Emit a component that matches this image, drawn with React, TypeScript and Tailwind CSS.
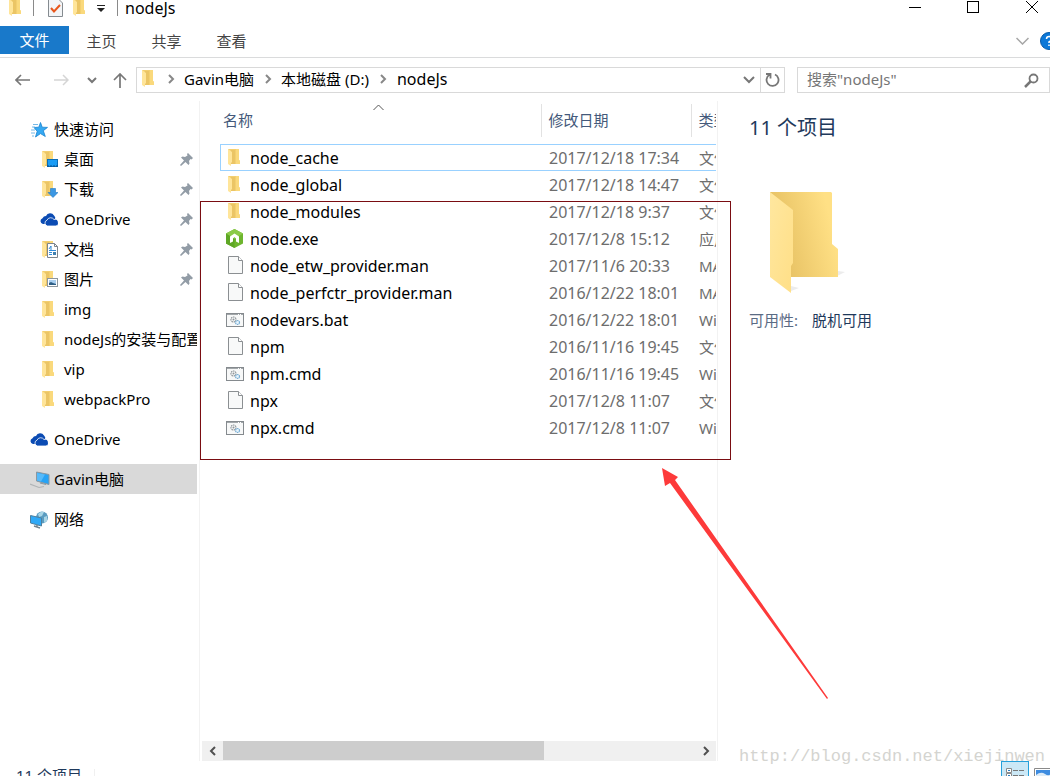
import type { ReactNode } from "react";

type FileKind = "folder" | "node" | "blank" | "script";

const files: { name: string; date: string; type: string; kind: FileKind }[] = [
  { name: "node_cache", date: "2017/12/18 17:34", type: "文件夹", kind: "folder" },
  { name: "node_global", date: "2017/12/18 14:47", type: "文件夹", kind: "folder" },
  { name: "node_modules", date: "2017/12/18 9:37", type: "文件夹", kind: "folder" },
  { name: "node.exe", date: "2017/12/8 15:12", type: "应用程序", kind: "node" },
  { name: "node_etw_provider.man", date: "2017/11/6 20:33", type: "MAN 文件", kind: "blank" },
  { name: "node_perfctr_provider.man", date: "2016/12/22 18:01", type: "MAN 文件", kind: "blank" },
  { name: "nodevars.bat", date: "2016/12/22 18:01", type: "Windows 批处理", kind: "script" },
  { name: "npm", date: "2016/11/16 19:45", type: "文件", kind: "blank" },
  { name: "npm.cmd", date: "2016/11/16 19:45", type: "Windows 命令", kind: "script" },
  { name: "npx", date: "2017/12/8 11:07", type: "文件", kind: "blank" },
  { name: "npx.cmd", date: "2017/12/8 11:07", type: "Windows 命令", kind: "script" },
];

function FolderShape() {
  return (
    <>
      <path d="M0 0h11v11l1 1v3H2z" fill="#f3cf70" />
      <path d="M3 1h4v14H3z" fill="#ebc565" />
      <path d="M8 0h3v11l1 1v3H8z" fill="#fad97c" />
      <path d="M0 0l4 3v10l-1 1v3l-3-2z" fill="#ffe59a" />
    </>
  );
}

function Folder() {
  return (
    <svg className="shrink-0" width="18" height="18" viewBox="-2 0 18 18" aria-hidden="true">
      <FolderShape />
    </svg>
  );
}

function DesktopFolder() {
  return (
    <svg className="shrink-0" width="18" height="18" viewBox="-2 0 18 18" aria-hidden="true">
      <FolderShape />
      <rect x="5.5" y="8.5" width="10" height="7" fill="#1a9cf5" stroke="#0b6db5" />
      <path d="M5 15h11" stroke="#0a4f8a" strokeDasharray="2 1" />
    </svg>
  );
}

function DownloadFolder() {
  return (
    <svg className="shrink-0" width="18" height="18" viewBox="-2 0 18 18" aria-hidden="true">
      <FolderShape />
      <path d="M8.5 7.500h5v4h2.500l-5 5-5-5h2.500z" fill="#3b97e3" stroke="#2179c4" strokeWidth=".6" />
    </svg>
  );
}

function DocumentFolder() {
  return (
    <svg className="shrink-0" width="18" height="18" viewBox="-2 0 18 18" aria-hidden="true">
      <FolderShape />
      <path d="M5.500 2.500h7l3 3v11h-10z" fill="#fff" stroke="#7d858c" />
      <path d="M12.500 2.500v3h3" fill="none" stroke="#7d858c" />
      <path d="M7 8l2-3v4M7 11.500h3M7 13.500h3M7 9.500h7" fill="none" stroke="#2f8bd8" />
      <path d="M11 11h3v3h-3z" fill="#3f7fae" />
    </svg>
  );
}

function PictureFolder() {
  return (
    <svg className="shrink-0" width="18" height="18" viewBox="-2 0 18 18" aria-hidden="true">
      <FolderShape />
      <rect x="5.500" y="7.500" width="10" height="8" fill="#fff" stroke="#8d969d" />
      <path d="M7 9h7v5H7z" fill="#a8cdee" />
      <path d="M7 14v-2l2-1 2 1 3 1v1z" fill="#2f5f86" />
    </svg>
  );
}

function Cloud() {
  return (
    <svg className="shrink-0" width="18" height="14" viewBox="0 0 18 14" aria-hidden="true">
      <path d="M5 11H3a3 3 0 0 1-.500-5.800A4 4 0 0 1 6 3a4.500 4.500 0 0 1 8-.500 3.500 3.500 0 0 1 1 4" fill="#0b4bb3" />
      <path d="M7.500 13a3 3 0 0 1-.500-5.800A4 4 0 0 1 14 6.500 3 3 0 0 1 16 13z" fill="#0b4bb3" stroke="#fff" strokeWidth=".8" />
    </svg>
  );
}

function Star() {
  return (
    <svg className="shrink-0" width="18" height="16" viewBox="0 0 18 16" aria-hidden="true">
      <path d="M10.500.500l1.700 4.700 5.300.200-4.200 3.300 2 5.800-4.800-2.900-5 3.400 1.700-5.700L4 5.500l4.800-.300z" fill="#35a9f2" stroke="#1782cf" strokeWidth=".8" />
      <path d="M3 2.500h5M2 5h3M1 8h4M1 11h4M2 14h2" stroke="#74b9e8" />
    </svg>
  );
}

function Computer() {
  return (
    <svg className="shrink-0" width="20" height="18" viewBox="0 0 20 18" aria-hidden="true">
      <path d="M6.500 1l12.500 2.500v10L6.500 10z" fill="#27a3f5" stroke="#8a97a0" />
      <path d="M7 2l8 1.500-4 7L7 9.500z" fill="#7fcdfb" opacity=".55" />
      <path d="M10 12l6 1.500" stroke="#8b979e" />
      <path d="M0 13l9 3.500 5-1" fill="none" stroke="#b0b4b6" strokeWidth="1.200" />
    </svg>
  );
}

function Network() {
  return (
    <svg className="shrink-0" width="18" height="18" viewBox="0 0 18 18" aria-hidden="true">
      <circle cx="12" cy="6.500" r="6" fill="#5b9cc0" />
      <path d="M8 3q3-3 6-2l-2 4-3 1zM14 6l3-1v5l-3 2z" fill="#a8d5e6" />
      <path d="M.500 4.500l11 2.500v8L.500 12z" fill="#2fa9f7" stroke="#4e7f9d" />
      <path d="M4 15l6 2M7 14v2" stroke="#72838d" strokeWidth="1.500" />
    </svg>
  );
}

function Pin() {
  return (
    <svg className="ml-auto mr-1 shrink-0" width="13" height="13" viewBox="0 0 13 13" aria-hidden="true">
      <path d="M8 0l5 5-1.500 1.500L10.500 6 9 8l.500 2.500L8.500 12 5.500 9 1 13l-1-1 4-4.500-3-3L2.500 3.500 5 4l2.500-1.500L7 1z" fill="#929ca6" />
    </svg>
  );
}

function BlankFile() {
  return (
    <svg width="16" height="19" viewBox="0 0 16 19" aria-hidden="true">
      <path d="M.500.500h10l4 4v13H.500z" fill="#f8f9f9" stroke="#8b8f92" />
      <path d="M10.500.500v4h4" fill="#fff" stroke="#8b8f92" />
    </svg>
  );
}

function ScriptFile() {
  return (
    <svg width="18" height="14" viewBox="0 0 18 14" aria-hidden="true">
      <rect x=".500" y=".500" width="17" height="13" fill="#f7f8f8" stroke="#858a8e" />
      <path d="M1 1.500h16" stroke="#a2a7aa" />
      <path d="M12 1.500h4" stroke="#fff" strokeDasharray="1 1" />
      <circle cx="7.500" cy="6.500" r="2.500" fill="none" stroke="#8b9297" strokeWidth="1.200" strokeDasharray="1.500 .7" />
      <circle cx="7.500" cy="6.500" r="1" fill="#90969a" />
      <circle cx="11.500" cy="9.500" r="2" fill="#e8f4fc" stroke="#79aed4" strokeWidth="1.200" strokeDasharray="1.500 .5" />
    </svg>
  );
}

function NodeFile() {
  return (
    <svg width="18" height="19" viewBox="0 0 18 19" aria-hidden="true">
      <path d="M8.500 0L17 4.500v10L8.500 19 0 14.500v-10z" fill="#6eb52f" />
      <path d="M8.500 0L17 4.500 8.500 10 0 4.500z" fill="#8bcb48" />
      <path d="M0 4.500L8.500 10v9L0 14.500z" fill="#5ea725" />
      <path d="M4 7.500L8.500 4.500 13 7.500V14l-3-1.500V9.500L8.500 8 7 9.500v3L4 14z" fill="#fff" />
    </svg>
  );
}

function FileIcon({ kind }: { kind: FileKind }) {
  if (kind === "folder") return <Folder />;
  if (kind === "node") return <NodeFile />;
  if (kind === "script") return <ScriptFile />;
  return <BlankFile />;
}

function Chevron({ dir, className }: { dir: "down" | "right" | "left"; className?: string }) {
  const paths = {
    down: "M1 3l4 4 4-4",
    right: "M3 1l4 4-4 4",
    left: "M7 1L3 5l4 4",
  };
  return (
    <svg className={className} width="10" height="10" viewBox="0 0 10 10" fill="none" stroke="currentColor" strokeWidth="2" aria-hidden="true">
      <path d={paths[dir]} />
    </svg>
  );
}

function NavItem({ icon, label, root, pinned, active }: { icon: ReactNode; label: string; root?: boolean; pinned?: boolean; active?: boolean }) {
  return (
    <a
      href="#"
      className={`mr-[2px] flex h-[30px] items-center overflow-hidden whitespace-nowrap ${root ? "pl-[30px]" : "pl-10"} ${active ? "bg-[#d9d9d9]" : ""}`}
    >
      <span className="flex w-6 shrink-0 items-center pt-[2px]">{icon}</span>
      <span>{label}</span>
      {pinned ? <Pin /> : null}
    </a>
  );
}

function TitleBar() {
  return (
    <header className="flex h-[26px] shrink-0 items-start">
      <div className="flex h-4 items-center pl-[7px]">
        <Folder />
        <span className="ml-2 h-4 w-px bg-[#8a8a8a]" />
        <svg className="ml-[14px]" width="15" height="17" viewBox="0 0 15 17" aria-hidden="true">
          <path d="M.500 0v16.500h14V3l-3-3" fill="#f3f5f7" stroke="#858b90" />
          <path d="M3 8l3 3.500L12 5" fill="none" stroke="#e8571c" strokeWidth="2" />
        </svg>
        <span className="ml-2 flex"><Folder /></span>
        <svg className="ml-2" width="8" height="7" viewBox="0 0 8 7" aria-hidden="true">
          <path d="M0 0h8v1H0zM0 3h8L4 7z" fill="#222" />
        </svg>
        <span className="ml-3 h-4 w-px bg-[#8a8a8a]" />
        <h1 className="ml-[7px] text-base leading-4">nodeJs</h1>
      </div>
      <div className="ml-auto flex h-[14px]">
        <button type="button" aria-label="最小化" className="flex w-[58px] items-center justify-center">
          <span className="h-px w-3 bg-black" />
        </button>
        <button type="button" aria-label="最大化" className="flex w-[58px] items-center justify-center">
          <span className="size-3 border border-black" />
        </button>
        <button type="button" aria-label="关闭" className="flex w-12 items-center pl-6">
          <svg width="12" height="12" viewBox="0 0 12 12" stroke="#000" aria-hidden="true">
            <path d="M0 0l12 12M12 0L0 12" />
          </svg>
        </button>
      </div>
    </header>
  );
}

function Ribbon() {
  return (
    <div className="flex h-8 shrink-0 overflow-hidden border-b border-[#dadbdc] text-[#444]">
      <button type="button" className="h-7 w-[69px] bg-[#1979ca] text-white">文件</button>
      {["主页", "共享", "查看"].map((tab) => (
        <button type="button" key={tab} className="h-[30px] w-[65px]">{tab}</button>
      ))}
      <button type="button" aria-label="展开功能区" className="ml-auto flex h-[30px] w-6 items-center text-[#a6a6a6]">
        <svg width="13" height="8" viewBox="0 0 13 8" fill="none" stroke="currentColor" aria-hidden="true">
          <path d="M.500 1l6 6 6-6" strokeWidth="1.500" />
        </svg>
      </button>
      <button type="button" aria-label="帮助" className="h-[30px] w-[10px] overflow-hidden">
        <svg className="max-w-none" width="18" height="18" viewBox="0 0 18 18" fill="none" aria-hidden="true">
          <circle cx="9" cy="9" r="8.500" fill="#0b78d8" stroke="#075aa8" />
          <path d="M6.500 7q0-2.500 2.500-2.500T11.500 7Q11.500 8.500 9 10v1M9 12.500v1.500" stroke="#fff" strokeWidth="1.500" />
        </svg>
      </button>
    </div>
  );
}

function AddressRow() {
  return (
    <div className="flex shrink-0 items-center pb-2 pt-[9px]">
      <div className="flex w-[136px] items-center pl-[15px] text-[#777]">
        <button type="button" aria-label="后退">
          <svg className="block" width="15" height="12" viewBox="0 0 15 12" fill="none" stroke="currentColor" strokeWidth="1.700" aria-hidden="true">
            <path d="M15 6H1M6 1L1 6l5 5" />
          </svg>
        </button>
        <button type="button" aria-label="前进" className="ml-6 text-[#d5d5d5]">
          <svg className="block" width="15" height="12" viewBox="0 0 15 12" fill="none" stroke="currentColor" strokeWidth="1.500" aria-hidden="true">
            <path d="M0 6h14M9 1l5 5-5 5" />
          </svg>
        </button>
        <button type="button" aria-label="最近的位置" className="ml-[18px]"><Chevron dir="down" /></button>
        <button type="button" aria-label="上移" className="ml-4">
          <svg className="block" width="14" height="15" viewBox="0 0 14 15" fill="none" stroke="currentColor" strokeWidth="1.700" aria-hidden="true">
            <path d="M7 15V1M1 7l6-6 6 6" />
          </svg>
        </button>
      </div>
      <nav aria-label="地址" className="flex h-[26px] flex-1 items-center border border-[#d9d9d9] pb-[2px] pl-[3px] text-black">
        <Folder />
        <Chevron dir="right" className="ml-2 text-[#888]" />
        <a href="#" className="ml-2">Gavin电脑</a>
        <Chevron dir="right" className="ml-[9px] text-[#888]" />
        <a href="#" className="ml-2">本地磁盘 (D:)</a>
        <Chevron dir="right" className="ml-[9px] text-[#888]" />
        <a href="#" className="ml-[9px] text-base leading-5">nodeJs</a>
        <button type="button" aria-label="以前的位置" className="ml-auto pr-[5px] pt-[2px] text-[#777]">
          <svg className="block" width="12" height="8" viewBox="0 0 12 8" fill="none" stroke="currentColor" strokeWidth="2" aria-hidden="true">
            <path d="M1 1l5 5 5-5" />
          </svg>
        </button>
        <button type="button" aria-label="刷新" className="-mb-[2px] flex w-6 items-center justify-center self-stretch border-l border-[#d9d9d9] text-[#777]">
          <svg width="15" height="16" viewBox="0 0 15 16" fill="none" stroke="currentColor" strokeWidth="1.800" aria-hidden="true">
            <path d="M10 2.500a6 6 0 1 1-5.500.300M1 2h4.500v4.500" />
          </svg>
        </button>
      </nav>
      <label className="ml-3 flex h-[26px] w-[253px] items-center border border-[#d9d9d9] pl-[9px] pr-[10px]">
        <input
          type="text"
          aria-label="搜索"
          placeholder={'搜索"nodeJs"'}
          className="min-w-0 flex-1 pb-[2px] outline-none placeholder:text-[#767676]"
        />
        <svg width="15" height="15" viewBox="0 0 15 15" fill="none" stroke="#777" aria-hidden="true">
          <circle cx="9.500" cy="5.500" r="4" strokeWidth="1.800" />
          <path d="M6.500 8.500L1 14" strokeWidth="2.500" />
        </svg>
      </label>
    </div>
  );
}

function Sidebar() {
  return (
    <nav aria-label="导航窗格" className="w-[200px] shrink-0 border-r border-[#f2f2f2] pt-[13px] text-black">
      <NavItem root icon={<Star />} label="快速访问" />
      <NavItem icon={<DesktopFolder />} label="桌面" pinned />
      <NavItem icon={<DownloadFolder />} label="下载" pinned />
      <NavItem icon={<Cloud />} label="OneDrive" pinned />
      <NavItem icon={<DocumentFolder />} label="文档" pinned />
      <NavItem icon={<PictureFolder />} label="图片" pinned />
      <NavItem icon={<Folder />} label="img" />
      <NavItem icon={<Folder />} label="nodeJs的安装与配置" />
      <NavItem icon={<Folder />} label="vip" />
      <NavItem icon={<Folder />} label="webpackPro" />
      <div className="mt-[10px] flex flex-col gap-[10px]">
        <NavItem root icon={<Cloud />} label="OneDrive" />
        <NavItem root active icon={<Computer />} label="Gavin电脑" />
        <NavItem root icon={<Network />} label="网络" />
      </div>
    </nav>
  );
}

function FileList() {
  return (
    <section className="relative flex w-[518px] shrink-0 flex-col border-r border-[#f2f2f2] pr-px pt-[3px]">
      <div className="min-h-0 flex-1 overflow-hidden pl-5">
        <table className="w-[640px] table-fixed border-collapse text-left">
          <thead>
            <tr className="h-[33px] text-[#44597a]">
              <th scope="col" className="relative w-[321px] border-r border-[#e2e2e2] pb-[2px] pl-[3px] font-normal">
                名称
                <svg className="absolute left-[153px] top-0" width="11" height="7" viewBox="0 0 11 7" fill="none" stroke="#555" aria-hidden="true">
                  <path d="M.500 6l5-5 5 5" />
                </svg>
              </th>
              <th scope="col" className="w-[150px] border-r border-[#e2e2e2] pb-[2px] pl-[7px] font-normal">修改日期</th>
              <th scope="col" className="pb-[2px] pl-[7px] font-normal">类型</th>
            </tr>
          </thead>
          <tbody className="before:block before:h-[7px]">
            {files.map((f, i) => (
              <tr key={f.name} className={`h-[27px] text-[#6d6d6d] ${i === 0 ? "outline -outline-offset-1 outline-[#99d1ff]" : ""}`}>
                <td className="pl-[6px] text-base leading-5 text-black">
                  <span className="flex items-center">
                    <span className={`flex w-6 ${f.kind === "blank" ? "pl-[2px]" : ""}`}>
                      <FileIcon kind={f.kind} />
                    </span>
                    {f.name}
                  </span>
                </td>
                <td className="whitespace-nowrap pl-2 text-base leading-5">{f.date}</td>
                <td className="whitespace-nowrap pl-2">{f.type}</td>
              </tr>
            ))}
          </tbody>
        </table>
      </div>

      <div className="ml-[2px] flex h-5 shrink-0 items-center bg-[#f0f0f0] text-[#505050]">
        <button type="button" aria-label="向左滚动" className="flex w-[21px] justify-center"><Chevron dir="left" /></button>
        <div className="flex h-full flex-1">
          <div className="h-[19px] w-[68%] bg-[#cdcdcd]" />
        </div>
        <button type="button" aria-label="向右滚动" className="flex w-[21px] justify-center"><Chevron dir="right" /></button>
      </div>

      {/* callout box and arrow drawn over the list */}
      <div className="pointer-events-none absolute left-0 top-[100px] h-[259px] w-[531px] border border-[#7a0d12]" />
      <svg className="pointer-events-none absolute left-[462px] top-[367px]" width="168" height="232" viewBox="0 0 168 232" aria-hidden="true">
        <path d="M0 0l16 9-3 3 153 218-1 1L8 15l-5 3z" fill="#fd3a3a" />
      </svg>
    </section>
  );
}

function Preview() {
  return (
    <aside className="min-w-0 flex-1 pl-[31px] pt-[13px] text-[#1e395b]">
      <h2 className="text-[20px] leading-7">11 个项目</h2>
      <svg className="ml-[21px] mt-[49px]" width="77" height="104" viewBox="0 0 77 104" aria-hidden="true">
        <defs>
          <linearGradient id="back" x1="0" y1="1" x2="1" y2=".7">
            <stop offset=".2" stopColor="#e6c062" />
            <stop offset="1" stopColor="#ffe085" />
          </linearGradient>
          <linearGradient id="flap" x1="0" y1="0" x2="1" y2="1">
            <stop offset="0" stopColor="#ffe79f" />
            <stop offset="1" stopColor="#ffdf87" />
          </linearGradient>
        </defs>
        <path d="M67 85l8-4-7-1zM21 100l8-3-8-2z" fill="#ececec" />
        <path d="M0 1h61l1 1v51l6 5v28H20z" fill="url(#back)" />
        <path d="M0 1l23 18v53l-2 3v27L0 86z" fill="url(#flap)" />
      </svg>
      <dl className="mt-[15px] flex leading-5">
        <dt className="w-[63px] text-[#5a6b84]">可用性:</dt>
        <dd>脱机可用</dd>
      </dl>
    </aside>
  );
}

function StatusBar() {
  return (
    <footer className="flex h-[15px] shrink-0 items-start overflow-hidden pl-4 text-[#1e395b]">
      <span className="pt-1 leading-5">11 个项目</span>
      <span className="ml-3 mt-2 h-3 w-px bg-[#f0f0f0]" />
      <button type="button" aria-label="详细信息" className="ml-auto flex h-6 w-7 justify-center border border-[#26a0da] bg-[#cbe8f6] pt-[6px]">
        <svg width="18" height="14" viewBox="0 0 18 14" aria-hidden="true">
          <path d="M.500.500h5v4h-5zM.500 5.500h5v4h-5z" fill="#fff" stroke="#8a8a8a" />
          <path d="M2 2h2v1H2zM2 7h2v1H2z" fill="#2d7fc1" />
          <path d="M7 2.500h5M13 2.500h5M7 7.500h5M13 7.500h5" stroke="#777" />
        </svg>
      </button>
      <button type="button" aria-label="大图标" className="ml-[5px] mt-[7px] w-4 overflow-hidden">
        <svg className="max-w-none" width="20" height="14" viewBox="0 0 20 14" aria-hidden="true">
          <path d="M.500.500h19v13H.500z" fill="#fff" stroke="#8a8a8a" />
          <path d="M2 2h16v10H2z" fill="#3e8ce0" />
          <path d="M2 7q5-4 9-1t7-1v7H2z" fill="#dcebf7" />
        </svg>
      </button>
    </footer>
  );
}

export default function App() {
  return (
    <div className="relative flex h-screen min-h-[600px] flex-col overflow-hidden bg-white font-['Noto_Sans','Noto_Sans_CJK_SC',sans-serif] text-[15px] leading-5 text-black">
      <TitleBar />
      <Ribbon />
      <AddressRow />
      <main className="flex min-h-0 flex-1">
        <Sidebar />
        <FileList />
        <Preview />
      </main>
      <StatusBar />
      <p className="pointer-events-none absolute bottom-[9px] right-[5px] font-['Liberation_Mono',monospace] text-[17px] leading-5 text-[#d4d4d0]">
        http://blog.csdn.net/xiejinwen
      </p>
    </div>
  );
}
